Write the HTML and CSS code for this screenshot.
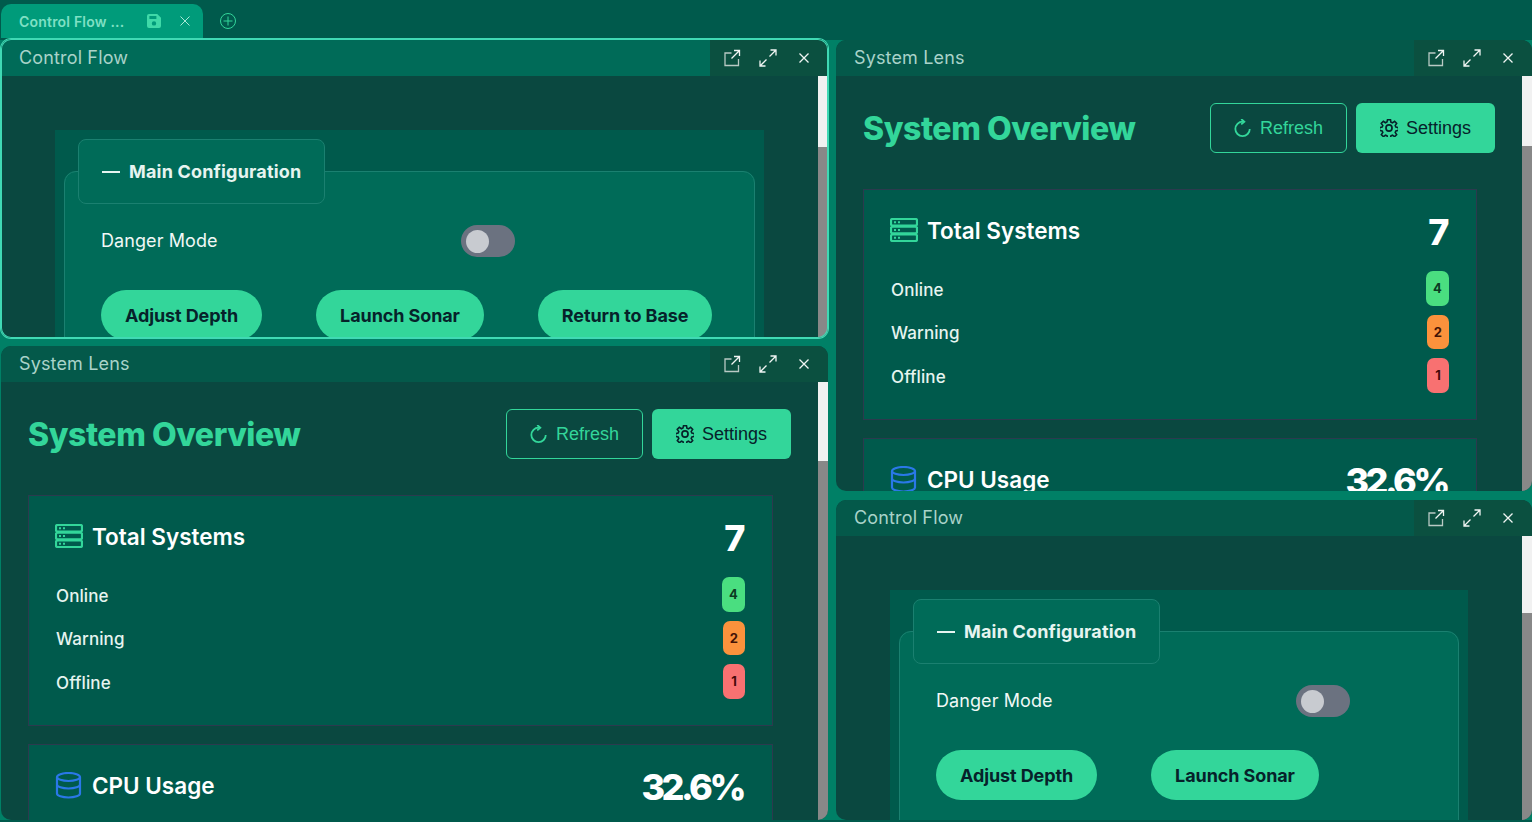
FILE: index.html
```html
<!DOCTYPE html>
<html lang="en">
<head>
	<meta charset="UTF-8">
	<title>Control Flow</title>
	<link rel="stylesheet" href="styles.css">
</head>
<body>
	<div class="app">
		<div class="tabbar">
			<div class="tab">
				<span class="tab-name">Control Flow ...</span>
				<svg class="tab-save" viewBox="0 0 14 14"><path fill-rule="evenodd" d="M2 0h8.2L14 3.8V12a2 2 0 0 1-2 2H2a2 2 0 0 1-2-2V2a2 2 0 0 1 2-2zM2.4 2v3h7V2zM7 7.2a2.2 2.2 0 1 0 0 4.4a2.2 2.2 0 0 0 0-4.4z"/></svg>
				<svg class="tab-close" viewBox="0 0 10 10"><path d="M.5.5l9 9M9.500.5l-9 9"/></svg>
			</div>
			<svg class="tab-add" viewBox="0 0 18 18"><circle cx="9" cy="9" r="7.500"/><path d="M9 4.500v9M4.500 9h9"/></svg>
		</div>

		<div class="dock">
			<div class="col col-left">
				<section class="pane pane-active">
					<header class="pane-head">
						<span class="pane-title">Control Flow</span>
						<div class="pane-actions">
							<svg class="act" viewBox="0 0 18 18"><path class="act-dim" d="M8.500 4H2v12.500h13.500V10"/><path d="M8.500 9.500L16.500 1.500M11 1.500h5.500V7"/></svg>
							<svg class="act" viewBox="0 0 18 18"><path d="M10.500 7.500L17 1M11.500 1H17v5.500M7.500 10.500L1 17M1 11.500V17h5.500"/></svg>
							<svg class="act" viewBox="0 0 18 18"><path d="M4.500 4.500l9 9M13.500 4.500l-9 9"/></svg>
						</div>
					</header>
					<div class="pane-body">
						<div class="pane-content flow">
							<div class="group">
								<fieldset class="config">
									<legend class="config-head"><span class="dash"></span>Main Configuration</legend>
									<div class="setting">
										<span class="setting-label">Danger Mode</span>
										<span class="toggle"><span class="knob"></span></span>
									</div>
									<div class="pills">
										<button class="pill">Adjust Depth</button>
										<button class="pill">Launch Sonar</button>
										<button class="pill">Return to Base</button>
									</div>
								</fieldset>
							</div>
						</div>
						<div class="scroll"><div class="track track-71"></div><div class="thumb"></div></div>
					</div>
				</section>

				<section class="pane pane-grow">
					<header class="pane-head">
						<span class="pane-title">System Lens</span>
						<div class="pane-actions">
							<svg class="act" viewBox="0 0 18 18"><path class="act-dim" d="M8.500 4H2v12.500h13.500V10"/><path d="M8.500 9.500L16.500 1.500M11 1.500h5.500V7"/></svg>
							<svg class="act" viewBox="0 0 18 18"><path d="M10.500 7.500L17 1M11.500 1H17v5.500M7.500 10.500L1 17M1 11.500V17h5.500"/></svg>
							<svg class="act" viewBox="0 0 18 18"><path d="M4.500 4.500l9 9M13.500 4.500l-9 9"/></svg>
						</div>
					</header>
					<div class="pane-body">
						<div class="pane-content lens">
							<div class="lens-head">
								<h1 class="lens-title">System Overview</h1>
								<div class="lens-btns">
									<button class="btn btn-ghost"><svg class="btn-icon" viewBox="3 1 19 20"><path d="M20 12a8 8 0 1 1-8-8h1"/><path d="M10.500 1l3.500 3-3.500 3"/></svg>Refresh</button>
									<button class="btn btn-solid"><svg class="btn-icon" viewBox="2.500 2.500 19 19"><path d="M10.300 2.500h3.400l.5 2.900 1.800.8 2.400-1.700 2.400 2.400-1.700 2.400.8 1.800 2.900.5v3.400l-2.900.5-.8 1.800 1.700 2.400-2.400 2.400-2.400-1.700-1.800.8-.5 2.900h-3.400l-.5-2.900-1.800-.8-2.400 1.700-2.400-2.400 1.700-2.400-.8-1.800-2.900-.5v-3.400l2.900-.5.8-1.800L3.100 6.800l2.400-2.400 2.400 1.700 1.800-.8z" transform="translate(0 -1.500) translate(12 12) scale(.92) translate(-12 -10.500)"/><circle cx="12" cy="12" r="3.200"/></svg>Settings</button>
								</div>
							</div>
							<div class="card">
								<div class="card-head">
									<svg class="card-icon icon-green" viewBox="0 0 28 24"><rect x="1" y="1" width="26" height="6.500" rx="1.500"/><rect x="1" y="8.750" width="26" height="6.500" rx="1.500"/><rect x="1" y="16.500" width="26" height="6.500" rx="1.500"/><path d="M4 4.250h2M8 4.250h2M4 12h2M8 12h2M4 19.750h2M8 19.750h2"/></svg>
									<span class="card-title">Total Systems</span>
									<span class="card-value">7</span>
								</div>
								<div class="stat"><span>Online</span><b class="badge badge-green">4</b></div>
								<div class="stat"><span>Warning</span><b class="badge badge-orange">2</b></div>
								<div class="stat"><span>Offline</span><b class="badge badge-red">1</b></div>
							</div>
							<div class="card">
								<div class="card-head">
									<svg class="card-icon icon-blue" viewBox="0 0 28 27"><ellipse cx="13.500" cy="5" rx="11.500" ry="4"/><path d="M2 5v16.500c0 2.200 5.100 4 11.500 4s11.500-1.800 11.500-4V5M2 12.500c0 2.200 5.100 4 11.500 4s11.500-1.800 11.500-4"/></svg>
									<span class="card-title">CPU Usage</span>
									<span class="card-value card-value-long">32.6%</span>
								</div>
							</div>
						</div>
						<div class="scroll"><div class="track track-79"></div><div class="thumb"></div></div>
					</div>
				</section>
			</div>

			<div class="col col-right">
				<section class="pane pane-tall">
					<header class="pane-head">
						<span class="pane-title">System Lens</span>
						<div class="pane-actions">
							<svg class="act" viewBox="0 0 18 18"><path class="act-dim" d="M8.500 4H2v12.500h13.500V10"/><path d="M8.500 9.500L16.500 1.500M11 1.500h5.500V7"/></svg>
							<svg class="act" viewBox="0 0 18 18"><path d="M10.500 7.500L17 1M11.500 1H17v5.500M7.500 10.500L1 17M1 11.500V17h5.500"/></svg>
							<svg class="act" viewBox="0 0 18 18"><path d="M4.500 4.500l9 9M13.500 4.500l-9 9"/></svg>
						</div>
					</header>
					<div class="pane-body">
						<div class="pane-content lens">
							<div class="lens-head">
								<h1 class="lens-title">System Overview</h1>
								<div class="lens-btns">
									<button class="btn btn-ghost"><svg class="btn-icon" viewBox="3 1 19 20"><path d="M20 12a8 8 0 1 1-8-8h1"/><path d="M10.500 1l3.500 3-3.500 3"/></svg>Refresh</button>
									<button class="btn btn-solid"><svg class="btn-icon" viewBox="2.500 2.500 19 19"><path d="M10.300 2.500h3.400l.5 2.900 1.800.8 2.400-1.700 2.400 2.400-1.700 2.400.8 1.800 2.900.5v3.400l-2.900.5-.8 1.800 1.700 2.400-2.400 2.400-2.400-1.700-1.800.8-.5 2.900h-3.400l-.5-2.900-1.800-.8-2.400 1.700-2.400-2.400 1.700-2.400-.8-1.800-2.900-.5v-3.400l2.900-.5.8-1.800L3.100 6.800l2.400-2.400 2.400 1.700 1.800-.8z" transform="translate(0 -1.500) translate(12 12) scale(.92) translate(-12 -10.500)"/><circle cx="12" cy="12" r="3.200"/></svg>Settings</button>
								</div>
							</div>
							<div class="card">
								<div class="card-head">
									<svg class="card-icon icon-green" viewBox="0 0 28 24"><rect x="1" y="1" width="26" height="6.500" rx="1.500"/><rect x="1" y="8.750" width="26" height="6.500" rx="1.500"/><rect x="1" y="16.500" width="26" height="6.500" rx="1.500"/><path d="M4 4.250h2M8 4.250h2M4 12h2M8 12h2M4 19.750h2M8 19.750h2"/></svg>
									<span class="card-title">Total Systems</span>
									<span class="card-value">7</span>
								</div>
								<div class="stat"><span>Online</span><b class="badge badge-green">4</b></div>
								<div class="stat"><span>Warning</span><b class="badge badge-orange">2</b></div>
								<div class="stat"><span>Offline</span><b class="badge badge-red">1</b></div>
							</div>
							<div class="card">
								<div class="card-head">
									<svg class="card-icon icon-blue" viewBox="0 0 28 27"><ellipse cx="13.500" cy="5" rx="11.500" ry="4"/><path d="M2 5v16.500c0 2.200 5.100 4 11.500 4s11.500-1.800 11.500-4V5M2 12.500c0 2.200 5.100 4 11.500 4s11.500-1.800 11.500-4"/></svg>
									<span class="card-title">CPU Usage</span>
									<span class="card-value card-value-long">32.6%</span>
								</div>
							</div>
						</div>
						<div class="scroll"><div class="track track-70"></div><div class="thumb"></div></div>
					</div>
				</section>

				<section class="pane pane-grow">
					<header class="pane-head">
						<span class="pane-title">Control Flow</span>
						<div class="pane-actions">
							<svg class="act" viewBox="0 0 18 18"><path class="act-dim" d="M8.500 4H2v12.500h13.500V10"/><path d="M8.500 9.500L16.500 1.500M11 1.500h5.500V7"/></svg>
							<svg class="act" viewBox="0 0 18 18"><path d="M10.500 7.500L17 1M11.500 1H17v5.500M7.500 10.500L1 17M1 11.500V17h5.500"/></svg>
							<svg class="act" viewBox="0 0 18 18"><path d="M4.500 4.500l9 9M13.500 4.500l-9 9"/></svg>
						</div>
					</header>
					<div class="pane-body">
						<div class="pane-content flow">
							<div class="group">
								<fieldset class="config">
									<legend class="config-head"><span class="dash"></span>Main Configuration</legend>
									<div class="setting">
										<span class="setting-label">Danger Mode</span>
										<span class="toggle"><span class="knob"></span></span>
									</div>
									<div class="pills">
										<button class="pill">Adjust Depth</button>
										<button class="pill">Launch Sonar</button>
										<button class="pill">Return to Base</button>
									</div>
								</fieldset>
							</div>
						</div>
						<div class="scroll"><div class="track track-77"></div><div class="thumb"></div></div>
					</div>
				</section>
			</div>
		</div>
	</div>
</body>
</html>
```

FILE: styles.css
```css
*{
	margin: 0;
	padding: 0;
	box-sizing: border-box;
}
html,body{
	height: 100%;
	overflow: hidden;
}
body{
	background: #005a4c;
	font-family: "Inter", "Liberation Sans", sans-serif;
	color: #fff;
}
button{
	border: 0;
	font-family: inherit;
	cursor: pointer;
}
svg{
	display: block;
	flex: none;
}
.app{
	height: 822px;
	display: flex;
	flex-direction: column;
}

/* tab strip */
.tabbar{
	height: 40px;
	flex: none;
	padding: 4px 0 2px 1px;
	display: flex;
	align-items: flex-start;
}
.tab{
	width: 202px;
	height: 34px;
	padding-left: 18px;
	background: #009b7a;
	border-radius: 10px 10px 0 0;
	display: flex;
	align-items: center;
}
.tab-name{
	width: 128px;
	font-size: 14px;
	font-weight: 600;
	letter-spacing: .2px;
	color: #7fe0c4;
	white-space: nowrap;
}
.tab-save{
	width: 14px;
	height: 14px;
	fill: #3fd9a8;
}
.tab-close{
	width: 10px;
	height: 10px;
	margin-left: 19px;
	fill: none;
	stroke: #a8e8d6;
	stroke-width: 1;
}
.tab-add{
	width: 18px;
	height: 18px;
	margin: 8px 0 0 16px;
	fill: none;
	stroke: #33d69a;
	stroke-width: 1;
}

/* dock */
.dock{
	flex: 1;
	display: flex;
	background: #008066;
	margin-bottom: 2px;
	padding-left: 1px;
	min-height: 0;
}
.col{
	display: flex;
	flex-direction: column;
}
.col-left{
	width: 827px;
	gap: 8px;
}
.col-right{
	flex: 1;
	margin-left: 8px;
	gap: 9px;
}
.pane{
	display: flex;
	flex-direction: column;
	overflow: hidden;
	border-radius: 10px;
	background: #0a4840;
	position: relative;
}
.pane-active{
	height: 299px;
	flex: none;
	margin-top: -1px;
	box-shadow: 0 0 0 1px #40d9b4;
	overflow: visible;
}
.pane-active::after{
	content: "";
	position: absolute;
	inset: 0;
	border-radius: 10px;
	box-shadow: inset 0 0 0 1px #40d9b4;
	pointer-events: none;
}
.pane-active .pane-body{
	overflow: hidden;
	border-radius: 0 0 10px 10px;
}
.pane-tall{
	height: 451px;
	flex: none;
}
.pane-grow{
	flex: 1;
	min-height: 0;
}
.pane-head{
	height: 36px;
	flex: none;
	padding-left: 18px;
	background: #04594a;
	display: flex;
	align-items: center;
	justify-content: space-between;
	border-radius: 10px 10px 0 0;
}
.pane-active .pane-head{
	height: 37px;
	background: #006b58;
	overflow: hidden;
}
.pane-title{
	margin-bottom: 1px;
	font-size: 18px;
	letter-spacing: .15px;
	color: #a9d3c9;
}
.pane-active .pane-title{
	margin-bottom: 0;
}
.pane-actions{
	width: 118px;
	height: 100%;
	padding: 0 6px 0 4px;
	background: #0b5040;
	display: flex;
	align-items: center;
	gap: 18px;
	justify-content: center;
}
.act{
	width: 18px;
	height: 18px;
	fill: none;
	stroke: #f0f5f3;
	stroke-width: 1.300;
}
.act-dim{
	stroke: #b9c9c4;
}
.pane-body{
	flex: 1;
	min-height: 0;
	display: flex;
}
.pane-content{
	flex: 1;
	min-width: 0;
	overflow: hidden;
}
.scroll{
	width: 10px;
	flex: none;
	display: flex;
	flex-direction: column;
}
.track{
	background: #f1f1f1;
}
.track-70{ height: 70px; }
.track-71{ height: 71px; }
.track-77{ height: 77px; }
.track-79{ height: 79px; }
.thumb{
	flex: 1;
	background: #888;
}

/* system lens */
.lens{
	padding: 27px 27px 0;
}
.lens-head{
	display: flex;
	align-items: center;
	justify-content: space-between;
	margin-bottom: 36px;
}
.lens-title{
	padding-top: 2px;
	font-size: 32px;
	line-height: 48px;
	font-weight: 800;
	letter-spacing: -.45px;
	color: #33d69a;
}
.lens-btns{
	display: flex;
	gap: 9px;
}
.btn{
	height: 50px;
	padding: 0 24px;
	border-radius: 6px;
	font-family: "Liberation Sans", sans-serif;
	font-size: 18px;
	display: flex;
	align-items: center;
	gap: 8px;
}
.btn-ghost{
	padding: 0 23px;
	background: transparent;
	border: 1px solid #33d69a;
	color: #33d69a;
}
.btn-solid{
	background: #33d69a;
	color: #06222a;
}
.btn-icon{
	width: 18px;
	height: 18px;
	fill: none;
	stroke: currentColor;
	stroke-width: 2;
}
.btn-solid .btn-icon{
	stroke-width: 1.800;
}
.card{
	margin: 0 18px 18px 0;
	padding: 27px 27px 26.500px;
	background: #005a4c;
	border: 1px solid #2c3a4e;
}
.card-head{
	height: 30px;
	margin-bottom: 24px;
	display: flex;
	align-items: center;
}
.card-icon{
	width: 28px;
	margin-left: -1px;
	fill: none;
	stroke-width: 2.200;
}
.icon-green{
	height: 24px;
	margin-bottom: 4px;
	stroke: #33d69a;
}
.icon-blue{
	height: 27px;
	align-self: flex-start;
	stroke: #2a78e8;
}
.card-title{
	margin: 0 0 4px 9px;
	font-size: 22.500px;
	font-weight: 600;
}
.card-value{
	margin: 0 2px 0 auto;
	font-size: 36px;
	font-weight: 800;
	letter-spacing: -2.500px;
}
.card-value-long{
	margin-bottom: 1px;
	letter-spacing: -3.500px;
}
.stat{
	height: 34.500px;
	margin-bottom: 9px;
	display: flex;
	align-items: center;
	justify-content: space-between;
	font-size: 17px;
	font-weight: 500;
	letter-spacing: .1px;
	color: #e6f4f0;
}
.stat span{
	padding-top: 3px;
	line-height: 20px;
}
.stat:last-child{
	margin-bottom: 0;
}
.badge{
	min-width: 22px;
	height: 100%;
	border-radius: 7px;
	font-size: 13px;
	font-weight: 700;
	display: flex;
	align-items: center;
	justify-content: center;
}
.badge-green{
	width: 23px;
	background: #4ade80;
	color: #0c3b22;
}
.badge-orange{
	background: #fb923c;
	color: #431407;
}
.badge-red{
	background: #f87171;
	color: #450a0a;
}

/* control flow */
.flow{
	padding: 54px 54px 0;
}
.group{
	padding: 9px 9px 0;
	background: #005a4c;
	height: 700px;
}
.config{
	padding: 0 36px 40px;
	background: #006b58;
	border: 1px solid #1b8070;
	border-radius: 12px 12px 0 0;
	min-width: 0;
}
.config-head{
	width: 247px;
	height: 65px;
	margin-left: -23px;
	padding-left: 23px;
	background: #006b58;
	border: 1px solid #1b8070;
	border-radius: 8px;
	display: flex;
	align-items: center;
	font-size: 18px;
	font-weight: 700;
	letter-spacing: .18px;
	color: #e6f4f0;
}
.dash{
	width: 18px;
	height: 2px;
	margin-right: 9px;
	background: #e6f4f0;
}
.setting{
	margin-top: 21px;
	display: flex;
	align-items: center;
}
.setting-label{
	width: 360px;
	margin-bottom: 1px;
	font-size: 18px;
	letter-spacing: .08px;
	color: #f0f8f6;
}
.toggle{
	width: 54px;
	height: 32px;
	padding: 4.500px 5px;
	border-radius: 16px;
	background: #6b7280;
	display: block;
}
.knob{
	width: 23px;
	height: 23px;
	border-radius: 50%;
	background: #c8cbd0;
	display: block;
}
.pills{
	margin-top: 33px;
	display: flex;
	flex-wrap: wrap;
	gap: 30px 54px;
}
.pill{
	height: 50px;
	padding: 0 24px;
	border-radius: 25px;
	background: #33d69a;
	color: #06222a;
	font-size: 18px;
	font-weight: 700;
	letter-spacing: -.1px;
}
```
